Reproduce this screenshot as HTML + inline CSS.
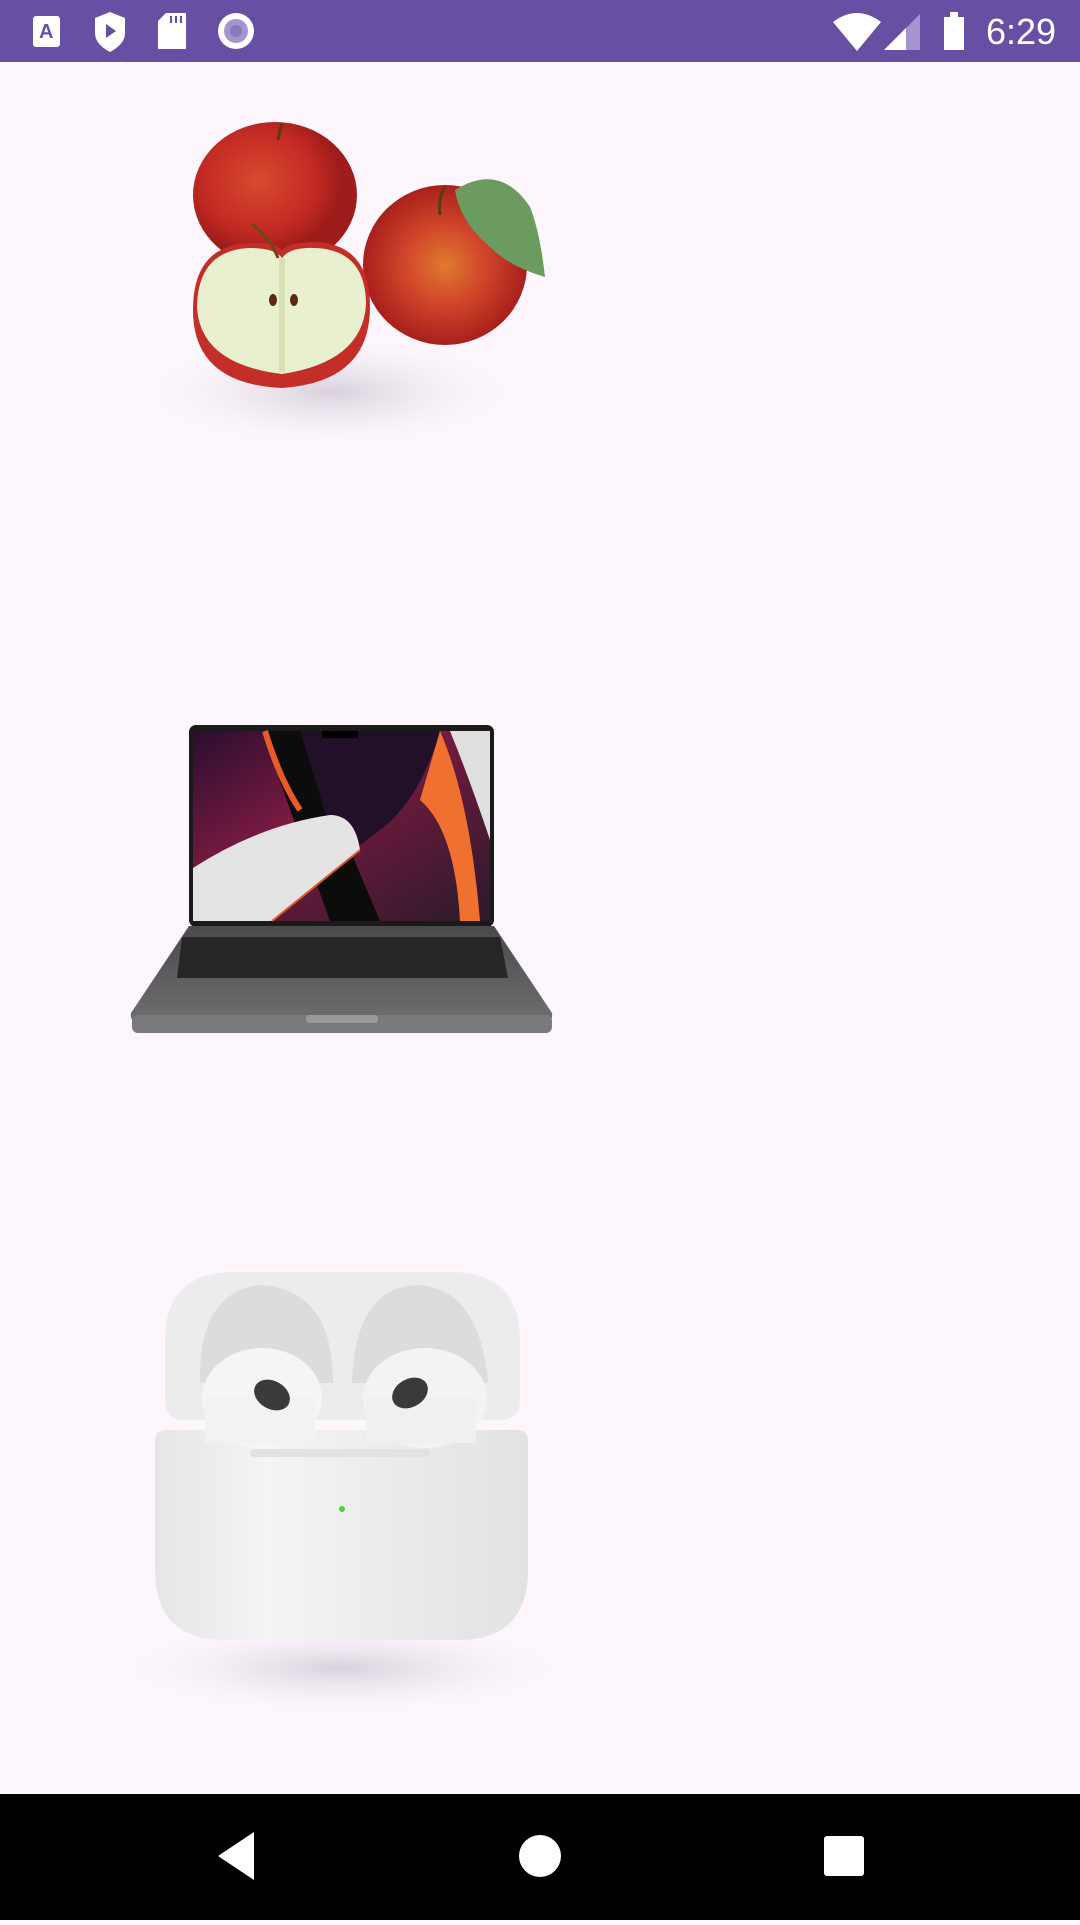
<!DOCTYPE html>
<html><head><style>
body{margin:0;width:1080px;height:1920px;background:#fdf6fd;position:relative;overflow:hidden;font-family:"Liberation Sans",sans-serif}
.sb{position:absolute;left:0;top:0;width:1080px;height:62px;background:#6750a4}
.nav{position:absolute;left:0;top:1794px;width:1080px;height:126px;background:#000}
</style></head><body>
<div class="sb">
<svg width="1080" height="62" style="position:absolute;left:0;top:0">
<rect x="33" y="16" width="27" height="31" rx="3" fill="#fff"/>
<text x="39" y="38" font-size="20" font-weight="bold" fill="#6750a4" font-family="Liberation Sans">A</text>
<path d="M110 12 L125 18 V33 Q125 44 110 52 Q95 44 95 33 V18 Z" fill="#fff"/>
<path d="M106 24 L116 31 L106 38 Z" fill="#6750a4"/>
<path d="M166 13 H186 V49 H158 V21 Z" fill="#fff"/>
<rect x="170" y="16" width="2" height="7" fill="#6750a4"/><rect x="175" y="16" width="2" height="7" fill="#6750a4"/><rect x="180" y="16" width="2" height="7" fill="#6750a4"/>
<circle cx="236" cy="31" r="18" fill="#fff"/><circle cx="236" cy="31" r="12" fill="#a595cc"/><circle cx="236" cy="31" r="6" fill="#8b7abd"/>
<path d="M833 22 Q857 4 881 22 L857 51 Z" fill="#fff"/>
<path d="M884 50 L920 14 V50 Z" fill="#a595cc"/><path d="M884 50 L906 28 V50 Z" fill="#fff"/>
<rect x="944" y="17" width="20" height="33" fill="#fff"/><rect x="950" y="12" width="8" height="5" fill="#fff"/>
<text x="986" y="44" font-size="36" fill="#fff" font-family="Liberation Sans">6:29</text>
</svg>
</div>

<svg width="1080" height="1794" style="position:absolute;left:0;top:0">
<defs>
<radialGradient id="sh"><stop offset="0" stop-color="#cfc6d2" stop-opacity=".8"/><stop offset="1" stop-color="#fdf6fd" stop-opacity="0"/></radialGradient>
<radialGradient id="red" cx=".4" cy=".4"><stop offset="0" stop-color="#d9492f"/><stop offset=".7" stop-color="#c22a23"/><stop offset="1" stop-color="#9e1c1a"/></radialGradient>
<radialGradient id="red2" cx=".5" cy=".5"><stop offset="0" stop-color="#e07a30"/><stop offset=".5" stop-color="#d0452a"/><stop offset="1" stop-color="#a8201c"/></radialGradient>
<linearGradient id="scr" x1="0" y1="0" x2="1" y2="1"><stop offset="0" stop-color="#2a0e30"/><stop offset=".4" stop-color="#7a1a40"/><stop offset="1" stop-color="#2a1a2a"/></linearGradient>
<linearGradient id="base" x1="0" y1="0" x2="0" y2="1"><stop offset="0" stop-color="#4a4a4c"/><stop offset="1" stop-color="#6e6e70"/></linearGradient>
<linearGradient id="case" x1="0" y1="0" x2="1" y2="0"><stop offset="0" stop-color="#e6e6e6"/><stop offset=".3" stop-color="#f4f4f4"/><stop offset="1" stop-color="#e2e2e2"/></linearGradient>
</defs>
<!-- apples -->
<ellipse cx="330" cy="392" rx="200" ry="60" fill="url(#sh)"/>
<ellipse cx="275" cy="195" rx="82" ry="73" fill="url(#red)"/>
<path d="M278 140 Q280 130 282 124" stroke="#5a3a10" stroke-width="3" fill="none"/>
<ellipse cx="445" cy="265" rx="82" ry="80" fill="url(#red2)"/>
<path d="M440 215 Q438 197 445 187" stroke="#5a3a10" stroke-width="3" fill="none"/>
<path d="M455 190 Q500 162 530 207 Q540 232 545 277 Q510 267 490 247 Q460 222 455 190 Z" fill="#6b9b5e"/>
<path d="M193 310 Q193 245 250 243 Q275 242 282 250 Q290 242 315 242 Q370 244 370 307 Q370 382 282 388 Q193 384 193 310 Z" fill="#c42e28"/>
<path d="M197 307 Q198 250 250 248 Q275 248 282 258 Q290 247 315 248 Q366 250 366 305 Q362 362 282 374 Q200 364 197 307 Z" fill="#e8f0cf"/>
<path d="M282 258 V372" stroke="#d6e0b4" stroke-width="6"/>
<ellipse cx="273" cy="300" rx="4" ry="6" fill="#5a2a10"/><ellipse cx="294" cy="300" rx="4" ry="6" fill="#5a2a10"/>
<path d="M252 224 Q270 237 278 258" stroke="#6a4a10" stroke-width="3" fill="none"/>
<!-- laptop -->
<rect x="189" y="725" width="305" height="202" rx="7" fill="#1a1a1a"/>
<rect x="193" y="731" width="297" height="190" fill="url(#scr)"/>
<path d="M262 731 H300 L380 921 H330 Z" fill="#0c0c0c"/>
<path d="M300 731 H440 Q420 800 380 830 L340 860 Z" fill="#221028"/>
<path d="M265 731 Q280 780 300 810" stroke="#e85a2a" stroke-width="6" fill="none"/>
<path d="M193 868 Q260 825 330 815 Q355 815 360 850 L272 921 H193 Z" fill="#e4e4e4"/>
<path d="M272 921 L360 850" stroke="#e05a30" stroke-width="2"/>
<path d="M440 731 Q470 800 480 921 H460 Q455 830 420 800 Z" fill="#f07030"/>
<path d="M450 731 H490 V840 Q470 780 450 731 Z" fill="#e0e0e0"/>
<rect x="322" y="731" width="36" height="7" fill="#000"/>
<path d="M189 926 H494 L552 1013 Q553 1020 548 1022 H135 Q130 1020 131 1013 Z" fill="url(#base)"/>
<path d="M182 937 H500 L508 978 H177 Z" fill="#262628"/>
<rect x="132" y="1015" width="420" height="18" rx="6" fill="#7a7a7c"/>
<rect x="306" y="1015" width="72" height="8" rx="3" fill="#9a9a9c"/>
<!-- airpods -->
<ellipse cx="342" cy="1668" rx="240" ry="50" fill="url(#sh)"/>
<path d="M165 1340 Q165 1272 235 1272 H450 Q520 1272 520 1340 V1400 Q520 1420 500 1420 H185 Q165 1420 165 1400 Z" fill="#ececec"/>
<path d="M200 1383 Q198 1290 262 1285 Q333 1290 333 1383 Z" fill="#dcdcdc"/>
<path d="M352 1383 Q355 1285 420 1285 Q480 1290 488 1383 Z" fill="#dcdcdc"/>
<path d="M155 1440 Q155 1430 168 1430 H515 Q528 1430 528 1440 V1570 Q528 1640 458 1640 H225 Q155 1640 155 1570 Z" fill="url(#case)"/>
<rect x="250" y="1449" width="180" height="8" rx="4" fill="#e2e2e2"/>
<ellipse cx="262" cy="1398" rx="60" ry="50" fill="#f5f5f5"/>
<ellipse cx="425" cy="1398" rx="62" ry="50" fill="#f3f3f3"/>
<rect x="205" y="1398" width="110" height="45" fill="#f2f2f2"/>
<rect x="366" y="1398" width="110" height="45" fill="#f0f0f0"/>
<ellipse cx="272" cy="1395" rx="19" ry="14" fill="#3a3a3a" transform="rotate(30 272 1395)"/>
<ellipse cx="410" cy="1393" rx="19" ry="14" fill="#3a3a3a" transform="rotate(-30 410 1393)"/>
<circle cx="342" cy="1509" r="3" fill="#4ed23a"/>
</svg>

<div class="nav">
<svg width="1080" height="126">
<path d="M254 38 V86 L218 62 Z" fill="#fff"/>
<circle cx="540" cy="62" r="21" fill="#fff"/>
<rect x="824" y="42" width="40" height="40" rx="3" fill="#fff"/>
</svg>
</div>
</body></html>
